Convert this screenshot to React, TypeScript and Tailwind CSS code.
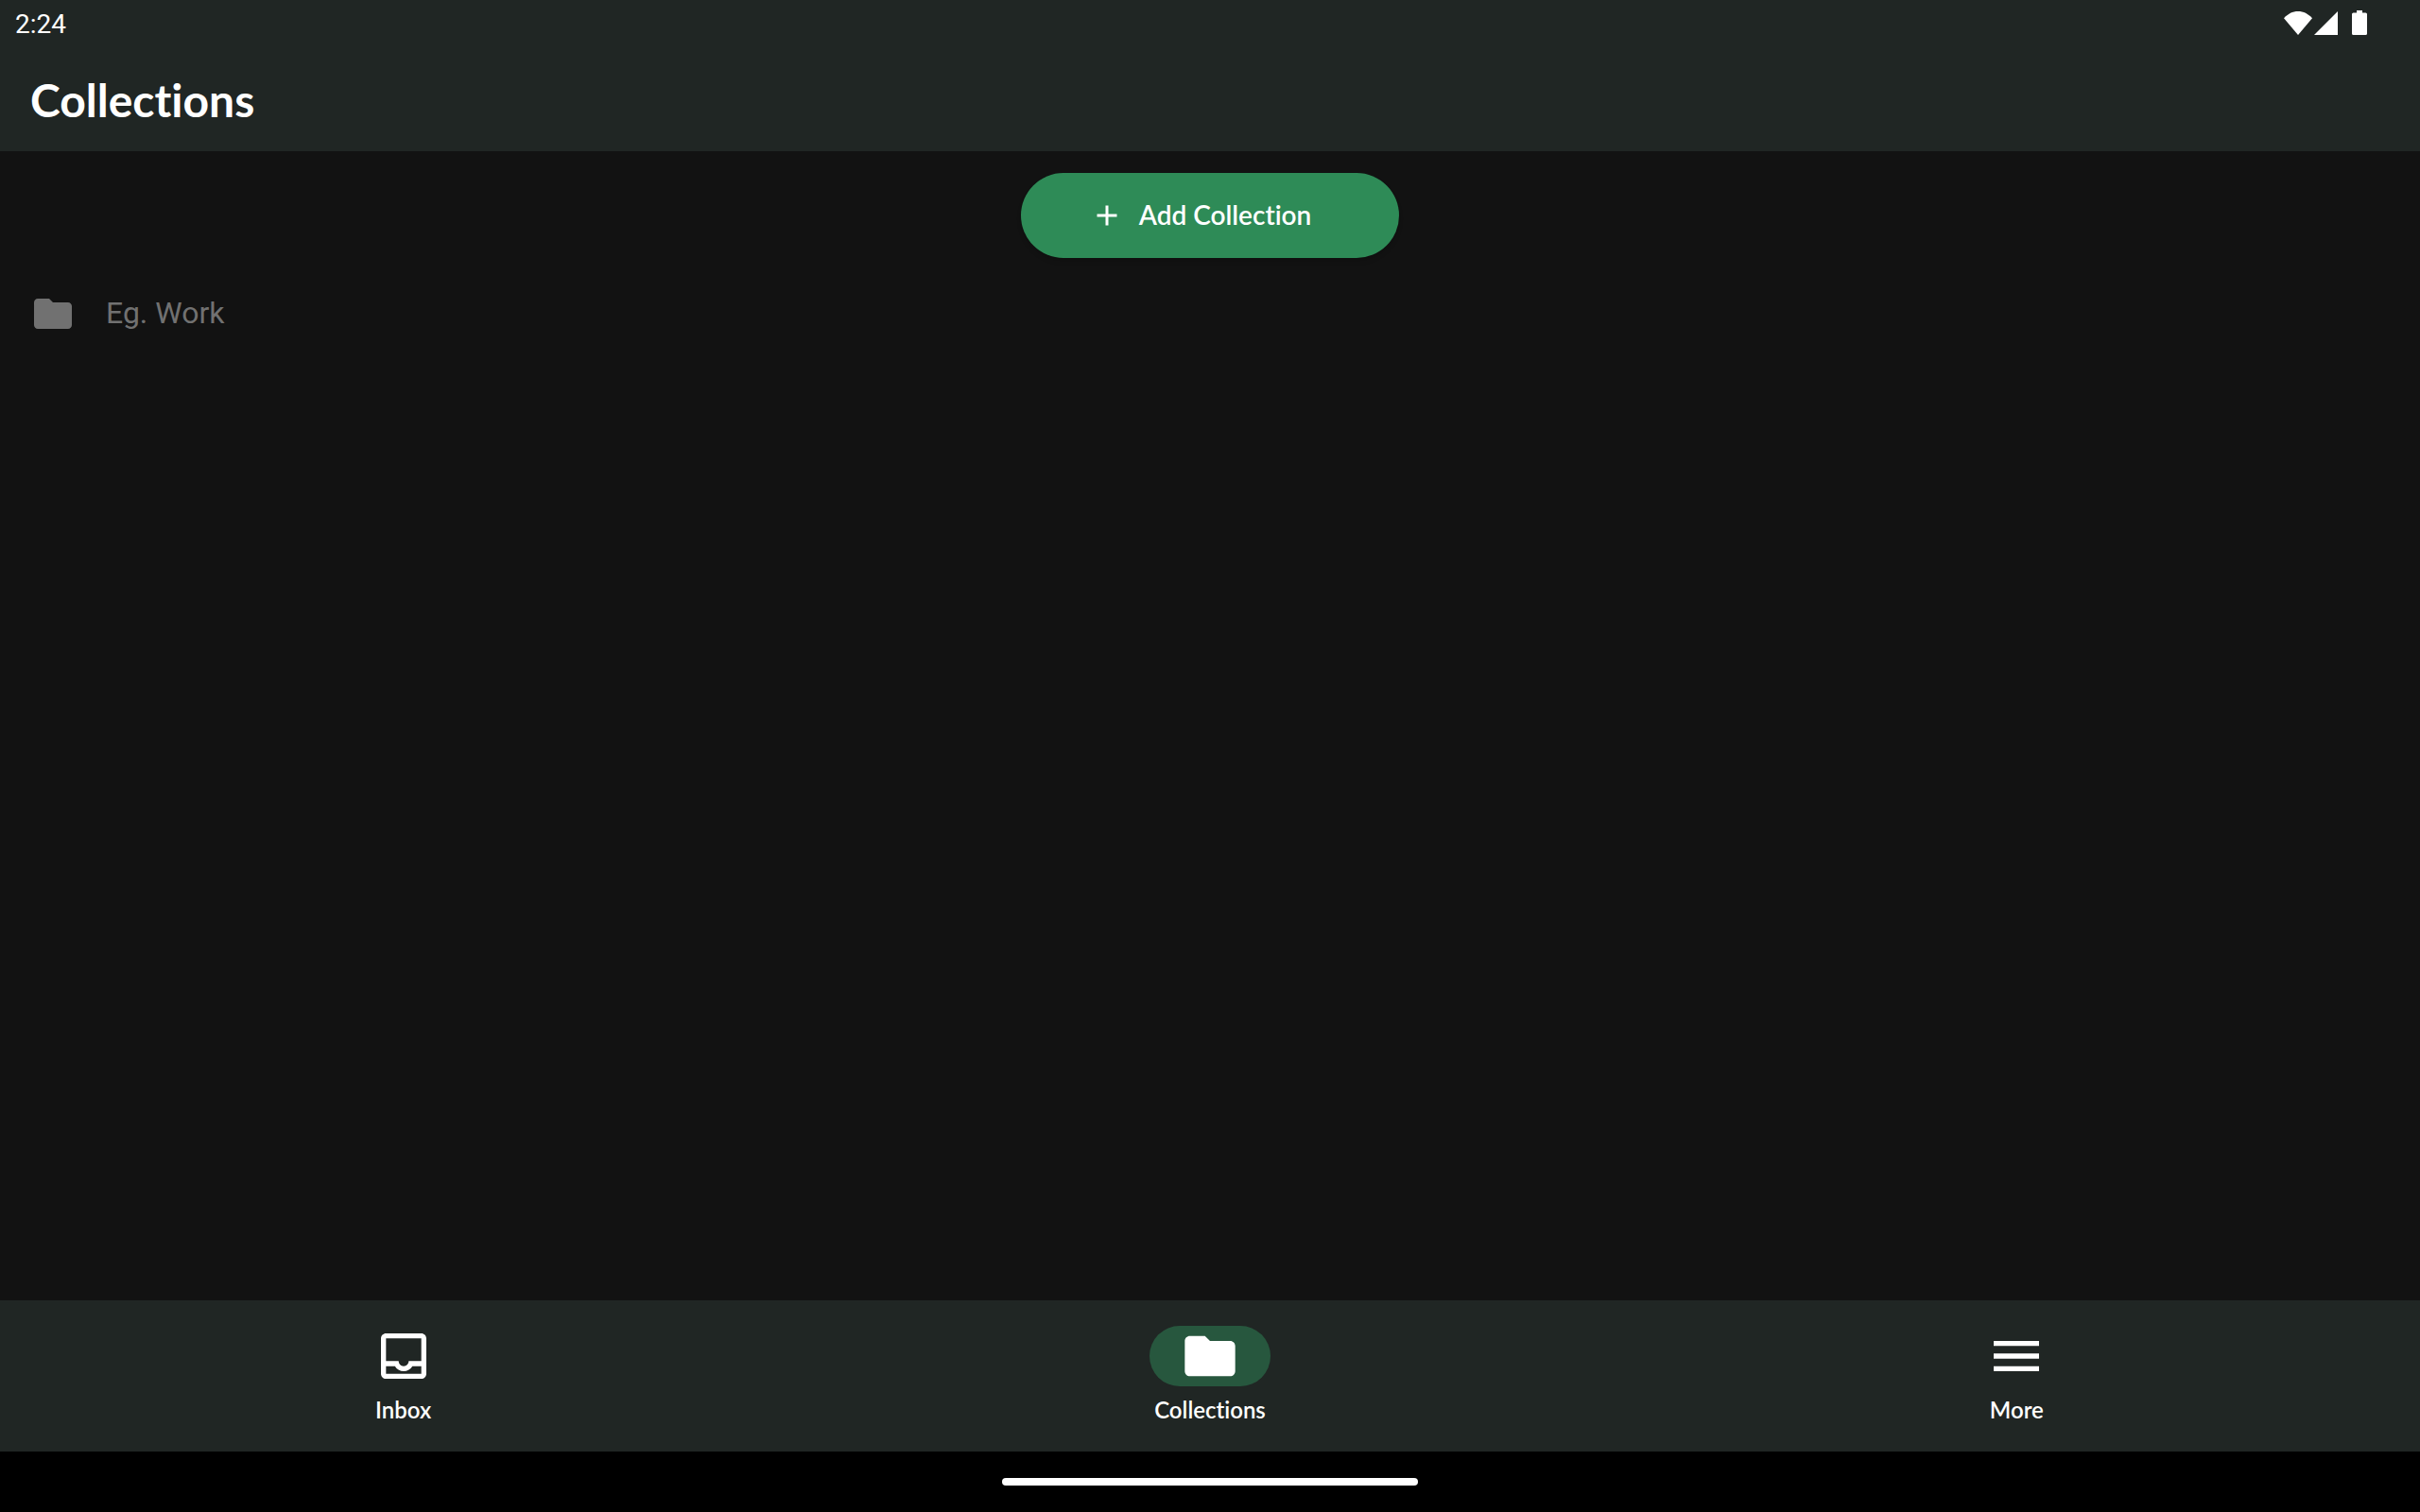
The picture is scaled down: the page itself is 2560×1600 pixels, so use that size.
import { useState } from "react";

const FOLDER =
  "M10 4H4c-1.1 0-1.99.9-1.99 2L2 18c0 1.1.9 2 2 2h16c1.1 0 2-.9 2-2V8c0-1.1-.9-2-2-2h-8l-2-2z";
const INBOX =
  "M19 3H5c-1.1 0-2 .9-2 2v14c0 1.1.9 2 2 2h14c1.1 0 2-.9 2-2V5c0-1.1-.9-2-2-2zm0 16H5v-3h3.56c.69 1.19 1.97 2 3.45 2s2.75-.81 3.45-2H19v3zm0-5h-4.99c0 1.1-.9 2-2 2s-2-.9-2-2H5V5h14v9z";
const MENU = "M3 18h18v-2H3v2zm0-5h18v-2H3v2zm0-7v2h18V6H3z";
const ADD = "M19 13h-6v6h-2v-6H5v-2h6V5h2v6h6v2z";

function Icon({ path, className }: { path: string; className: string }) {
  return (
    <svg viewBox="0 0 24 24" fill="currentColor" aria-hidden="true" className={className}>
      <path d={path} />
    </svg>
  );
}

function StatusBar() {
  return (
    <div className="flex h-12 items-center justify-between pr-14 pl-4 font-['Roboto',sans-serif] text-[28px] leading-8">
      <time className="pt-1">2:24</time>
      <div className="flex items-end">
        <svg viewBox="0 0 30 25" fill="currentColor" className="h-[25px] w-[30px]" aria-label="Wi-Fi">
          <path d="M0 7.2C4.2 2.6 9.4 0 15 0s10.800 2.600 15 7.200L15 25z" />
        </svg>
        <svg viewBox="0 0 25 25" fill="currentColor" className="ml-0.5 h-[25px] w-[25px]" aria-label="Signal">
          <path d="M0 25L25 0v25z" />
        </svg>
        <svg viewBox="0 0 16 26" fill="currentColor" className="ml-[15px] h-[26px] w-4" aria-label="Battery">
          <path d="M5 0h6v2.600h3.500A1.500 1.500 0 0 1 16 4.100v20.400a1.500 1.500 0 0 1-1.500 1.500h-13A1.500 1.500 0 0 1 0 24.500V4.100a1.500 1.500 0 0 1 1.500-1.500H5z" />
        </svg>
      </div>
    </div>
  );
}

const TABS = [
  { name: "Inbox", icon: INBOX },
  { name: "Collections", icon: FOLDER },
  { name: "More", icon: MENU },
];

export default function App() {
  const [active, setActive] = useState("Collections");
  const [name, setName] = useState("");

  return (
    <div className="flex min-h-screen flex-col bg-[#121212] font-['Lato',sans-serif] text-white [font-variant-ligatures:none]">
      <header className="bg-[#202624]">
        <StatusBar />
        <h1 className="px-8 pt-7 pb-6 text-5xl leading-[60px] font-bold">Collections</h1>
      </header>

      <main className="flex grow flex-col">
        <button
          type="button"
          className="mt-[23px] flex h-[90px] w-[400px] items-center justify-center gap-4 self-center rounded-full bg-[#2e8b57] pr-5 text-[28px] leading-9 font-semibold shadow-md"
        >
          <Icon path={ADD} className="size-9" />
          <span className="pb-0.5">Add Collection</span>
        </button>
        <label className="mt-7 flex h-[62px] items-center gap-8 px-8">
          <Icon path={FOLDER} className="size-12 text-[#717171]" />
          <input
            type="text"
            aria-label="Collection name"
            placeholder="Eg. Work"
            value={name}
            onChange={(e) => setName(e.target.value)}
            className="h-12 grow bg-transparent pb-0.5 font-['Roboto',sans-serif] text-[32px] outline-none placeholder:text-[#717171]"
          />
        </label>
      </main>

      <nav className="grid h-40 grid-cols-3 bg-[#202624]">
        {TABS.map((tab) => (
          <button
            key={tab.name}
            type="button"
            aria-current={tab.name === active ? "page" : undefined}
            onClick={() => setActive(tab.name)}
            className="flex flex-col items-center gap-[9px] pt-[27px] text-2xl leading-8 font-semibold"
          >
            <span
              className={
                tab.name === active
                  ? "flex w-32 justify-center rounded-full bg-[#27573e]"
                  : "flex w-32 justify-center rounded-full"
              }
            >
              <Icon path={tab.icon} className="size-16" />
            </span>
            {tab.name}
          </button>
        ))}
      </nav>

      <div className="flex h-16 items-center justify-center bg-black">
        <div className="h-2 w-[440px] rounded-full bg-white" />
      </div>
    </div>
  );
}
